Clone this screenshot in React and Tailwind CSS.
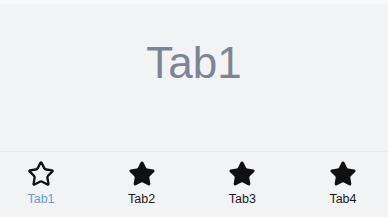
import React from "react";

const STAR =
  "M11.525 2.295a.53.53 0 0 1 .95 0l2.31 4.679a2.123 2.123 0 0 0 1.595 1.16l5.166.756a.53.53 0 0 1 .294.904l-3.736 3.638a2.123 2.123 0 0 0-.611 1.878l.882 5.14a.53.53 0 0 1-.771.56l-4.618-2.428a2.122 2.122 0 0 0-1.973 0L6.396 21.01a.53.53 0 0 1-.77-.56l.881-5.139a2.122 2.122 0 0 0-.611-1.879L2.16 9.795a.53.53 0 0 1 .294-.906l5.165-.755a2.122 2.122 0 0 0 1.597-1.16z";

function Star({ filled }) {
  return (
    <svg width="28" height="28" viewBox="0 0 24 24" fill={filled ? "#111111" : "none"} stroke="#111111" strokeWidth={filled ? 1.6 : 2} strokeLinejoin="round">
      <path d={STAR} />
    </svg>
  );
}

export default function App() {
  const tabs = ["Tab1", "Tab2", "Tab3", "Tab4"];
  return (
    <div className="w-[388px] h-[217px] flex flex-col bg-[#f2f3f5]" style={{ fontFamily: '"Liberation Sans", Arial, sans-serif' }}>
      <div className="h-[4px] bg-[#f7f8fa]" />
      <div className="h-[147px] flex justify-center pt-[37px]">
        <div className="text-[44px] leading-none h-[44px] text-[#7b8594]">Tab1</div>
      </div>
      <div className="flex-1 border-t border-[#e6e7ea] flex justify-between pl-4 pr-5">
        {tabs.map((t, i) => (
          <div key={t} className="w-[50px] flex flex-col items-center pt-[8px]">
            <Star filled={i !== 0} />
            <div className={"mt-[3px] text-[12.5px] leading-4 " + (i === 0 ? "text-[#5b9be6]" : "text-[#1a1a1a]")}>{t}</div>
          </div>
        ))}
      </div>
    </div>
  );
}
